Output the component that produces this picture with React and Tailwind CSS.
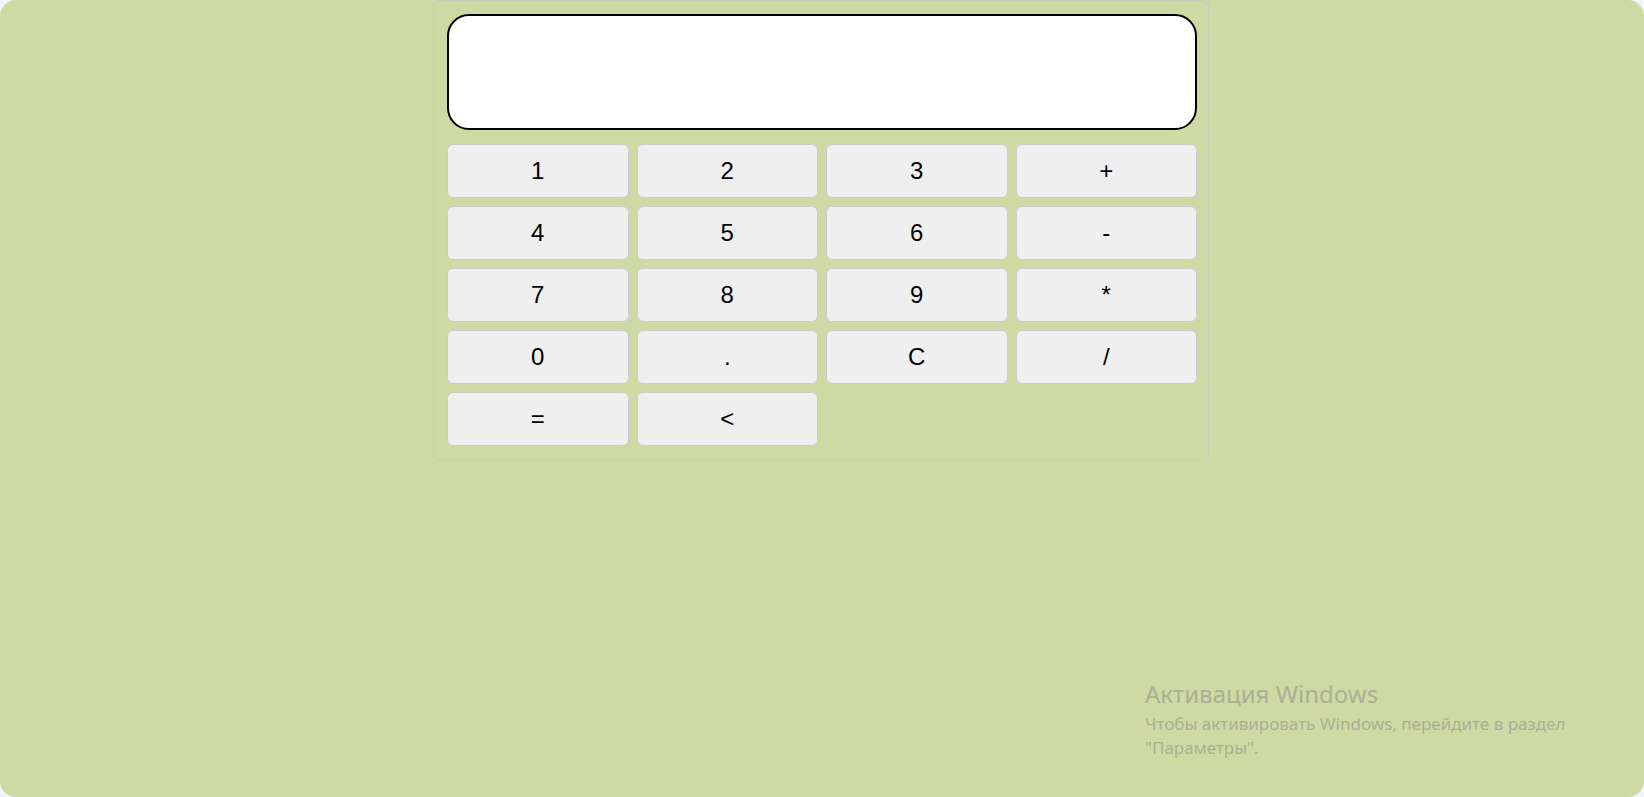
import React, { useState } from 'react';

const KEYS = ['1', '2', '3', '+', '4', '5', '6', '-', '7', '8', '9', '*', '0', '.', 'C', '/', '=', '<'];

const App = () => {
  const [value, setValue] = useState('');

  const press = (k) => {
    if (k === 'C') return setValue('');
    if (k === '<') return setValue((v) => v.slice(0, -1));
    if (k === '=') {
      try {
        // eslint-disable-next-line no-new-func
        setValue(String(Function(`return (${value || 0})`)()));
      } catch {
        setValue('Error');
      }
      return;
    }
    setValue((v) => v + k);
  };

  return (
    <div className="w-[1644px] h-[797px] bg-[#eef5fb]">
      <div className="relative w-full h-full rounded-2xl bg-[#cfd9a3] overflow-hidden">
        {/* Calculator */}
        <div className="flex justify-start pl-[433px]">
          <div className="w-[776px] border border-[#c9cdbc] rounded-md pl-[13px] pr-[11px] pt-[13px] pb-[13px]">
            <input
              readOnly
              value={value}
              className="block w-full h-[116px] bg-white border-2 border-black rounded-[22px] px-5 text-right text-[40px] font-['Liberation_Sans',Arial,sans-serif] outline-none"
            />
            <div className="grid grid-cols-4 gap-2 mt-[14px]">
              {KEYS.map((k) => (
                <button
                  key={k}
                  onClick={() => press(k)}
                  className="h-[54px] bg-[#efefef] border border-[#cccccc] rounded-md text-[24px] text-black font-['Liberation_Sans',Arial,sans-serif] cursor-pointer"
                >
                  {k}
                </button>
              ))}
            </div>
          </div>
        </div>

        {/* Windows activation watermark */}
        <div className="absolute left-[1145px] top-[679px] text-[#a9b095] font-['Noto_Sans',sans-serif] pointer-events-none">
          <div className="text-[24px] leading-[30px]">Активация Windows</div>
          <div className="text-[17px] leading-[24px] mt-[3px]">
            Чтобы активировать Windows, перейдите в раздел
            <br />
            "Параметры".
          </div>
        </div>
      </div>
    </div>
  );
};

export default App;
